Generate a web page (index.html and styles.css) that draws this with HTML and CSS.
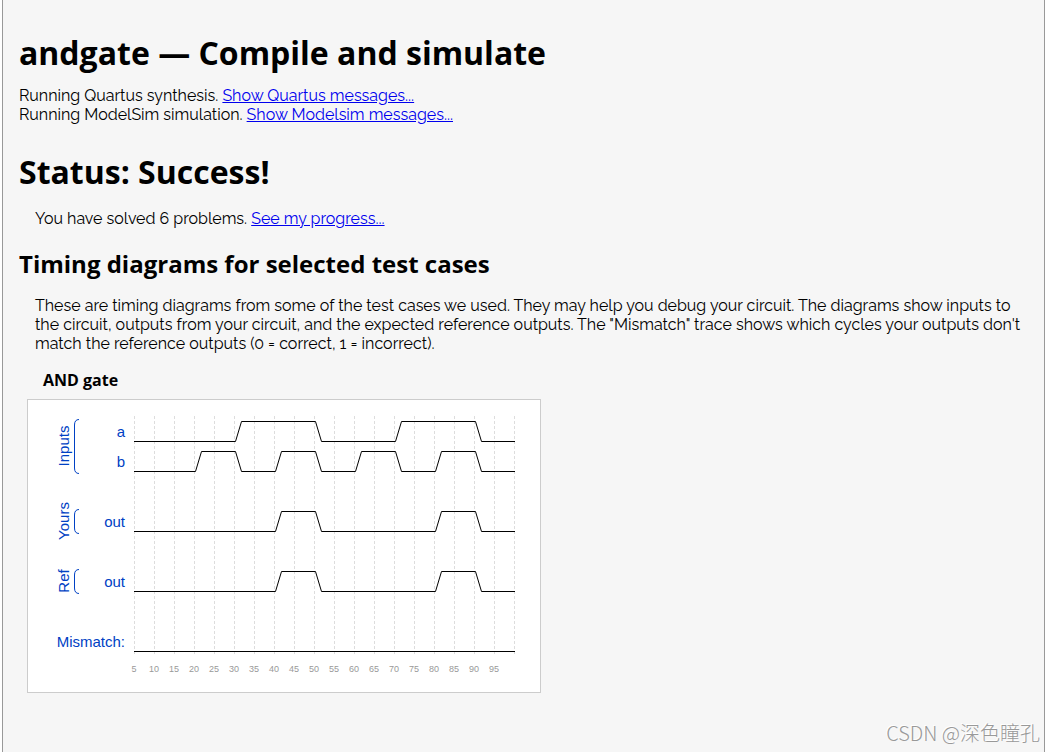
FILE: index.html
```
<!DOCTYPE html>
<html lang="en">

<head>
    <meta charset="utf-8">
    <title>andgate — Compile and simulate</title>
    <link rel="stylesheet" href="styles.css">
</head>

<body>
    <main class="page">
        <h1>andgate — Compile and simulate</h1>
        <div>Running Quartus synthesis. <a href="#quartus">Show Quartus messages...</a></div>
        <div>Running ModelSim simulation. <a href="#modelsim">Show Modelsim messages...</a></div>

        <h1 class="status">Status: Success!</h1>
        <p>You have solved 6 problems. <a href="#progress">See my progress...</a></p>

        <h2>Timing diagrams for selected test cases</h2>
        <p>These are timing diagrams from some of the test cases we used. They may help you debug your circuit. The diagrams show inputs to the circuit, outputs from your circuit, and the expected reference outputs. The "Mismatch" trace shows which cycles your outputs don't match the reference outputs (0 = correct, 1 = incorrect).</p>

        <h3>AND gate</h3>
        <div class="diagram">
            <svg width="512" height="292" viewBox="0 0 512 292">
                <!-- one grid line every 5 time units -->
                <path class="grid" d="M106.5 16v238M126.5 16v238M146.5 16v238M166.5 16v238M186.5 16v238M206.5 16v238M226.5 16v238M246.5 16v238M266.5 16v238M286.5 16v238M306.5 16v238M326.5 16v238M346.5 16v238M366.5 16v238M386.5 16v238M406.5 16v238M426.5 16v238M446.5 16v238M466.5 16v238M486.5 16v238"/>

                <!-- waves -->
                <g class="wave">
                    <path d="M106 41.5H207.5L213.5 21.5H287.5L293.5 41.5H367.5L373.5 21.5H447.5L453.5 41.5H487"/>
                    <path d="M106 71.5H167.5L173.5 51.5H207.5L213.5 71.5H247.5L253.5 51.5H287.5L293.5 71.5H327.5L333.5 51.5H367.5L373.5 71.5H407.5L413.5 51.5H447.5L453.5 71.5H487"/>
                    <path d="M106 131.5H247.5L253.5 111.5H287.5L293.5 131.5H407.5L413.5 111.5H447.5L453.5 131.5H487"/>
                    <path d="M106 191.5H247.5L253.5 171.5H287.5L293.5 191.5H407.5L413.5 171.5H447.5L453.5 191.5H487"/>
                    <path d="M106 251.5H487"/>
                </g>

                <!-- group brackets -->
                <g class="bracket">
                    <path d="M51 19.5Q46.5 19.5 46.5 25V68Q46.5 73.5 51 73.5"/>
                    <path d="M51 109.5Q46.5 109.5 46.5 115V128Q46.5 133.5 51 133.5"/>
                    <path d="M51 169.5Q46.5 169.5 46.5 175V188Q46.5 193.5 51 193.5"/>
                </g>
                <g class="group">
                    <text transform="translate(41 46) rotate(-90)">Inputs</text>
                    <text transform="translate(41 121) rotate(-90)">Yours</text>
                    <text transform="translate(41 181) rotate(-90)">Ref</text>
                </g>
                <g class="name">
                    <text x="97" y="37">a</text>
                    <text x="97" y="67">b</text>
                    <text x="97" y="127">out</text>
                    <text x="97" y="187">out</text>
                    <text x="97" y="247">Mismatch:</text>
                </g>
                <g class="tick">
                    <text x="106" y="272">5</text>
                    <text x="126" y="272">10</text>
                    <text x="146" y="272">15</text>
                    <text x="166" y="272">20</text>
                    <text x="186" y="272">25</text>
                    <text x="206" y="272">30</text>
                    <text x="226" y="272">35</text>
                    <text x="246" y="272">40</text>
                    <text x="266" y="272">45</text>
                    <text x="286" y="272">50</text>
                    <text x="306" y="272">55</text>
                    <text x="326" y="272">60</text>
                    <text x="346" y="272">65</text>
                    <text x="366" y="272">70</text>
                    <text x="386" y="272">75</text>
                    <text x="406" y="272">80</text>
                    <text x="426" y="272">85</text>
                    <text x="446" y="272">90</text>
                    <text x="466" y="272">95</text>
                </g>
            </svg>
        </div>
        <div class="watermark">CSDN @深色瞳孔</div>
    </main>
</body>

</html>
```

FILE: styles.css
```
* {
    box-sizing: border-box;
}

body {
    margin: 0;
    background-color: #fff;
    color: #000;
    font-family: Raleway, Lato, sans-serif;
    font-size: 16px;
    font-weight: 400;
    line-height: 19px;
}

.page {
    position: relative;
    min-height: 100vh;
    margin: 0 10px 0 2px;
    padding: 31px 16px 16px;
    border: 0 solid #999;
    border-width: 0 1px;
    background-color: #f6f6f6;
}

h1, h2, h3 {
    margin: 0;
    font-family: "Open Sans", sans-serif;
    font-weight: 700;
}

h1 {
    margin-bottom: 11px;
    font-size: 32px;
    line-height: 44px;
}

h1.status {
    margin-top: 26px;
    margin-bottom: 15px;
}

h2 {
    margin: 19px 0 16px;
    font-size: 24px;
    line-height: 33px;
}

h3 {
    margin: 16px 24px 8px;
    font-size: 16px;
    line-height: 22px;
}

p {
    margin: 0 6px 0 16px;
}

a {
    color: #00e;
}

.diagram {
    width: fit-content;
    margin-left: 8px;
    border: 1px solid #ccc;
    background-color: #fff;
}

.diagram svg {
    display: block;
    font-family: "Liberation Sans", Arial, sans-serif;
    font-weight: 400;
}

.grid {
    fill: none;
    stroke: #ddd;
    stroke-dasharray: 3 2;
}

.wave {
    fill: none;
    stroke: #000;
}

.bracket {
    fill: none;
    stroke: #0041c4;
}

.group, .name {
    fill: #0041c4;
    font-size: 15px;
}

.group, .tick {
    text-anchor: middle;
}

.name {
    text-anchor: end;
}

.tick {
    fill: #999;
    font-size: 9px;
}

.watermark {
    position: absolute;
    right: 4px;
    bottom: 6px;
    color: #999;
    font-family: "Noto Sans CJK SC", sans-serif;
    font-size: 20px;
    font-weight: 300;
    line-height: 26px;
    text-shadow: -1px -1px 0 #fff;
}
```
